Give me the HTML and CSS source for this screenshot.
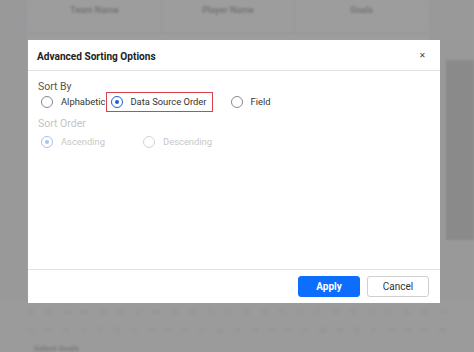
FILE: index.html
```html
<!DOCTYPE html>
<html>
<head>
<meta charset="utf-8">
<link rel="stylesheet" href="styles.css">
</head>
<body>
<div class="page">
  <div class="grid">
    <div class="gutter"></div>
    <div class="table">
      <div class="thead">
        <div class="th">Team Name</div>
        <div class="th">Player Name</div>
        <div class="th">Goals</div>
      </div>
    </div>
    <div class="side"></div>
  </div>
  <div class="rows">
    <div class="cells"><span>01</span><span>02</span><span>03</span><span>04</span><span>05</span><span>06</span><span>07</span><span>08</span><span>09</span><span>10</span><span>11</span><span>12</span><span>13</span><span>14</span><span>15</span><span>16</span><span>17</span><span>18</span><span>19</span><span>20</span><span>21</span><span>22</span><span>23</span><span>24</span></div>
    <div class="cells"><span>11</span><span>12</span><span>13</span><span>14</span><span>15</span><span>16</span><span>17</span><span>18</span><span>19</span><span>20</span><span>21</span><span>22</span><span>23</span><span>24</span><span>25</span><span>26</span><span>27</span><span>28</span><span>29</span><span>30</span><span>31</span><span>32</span><span>33</span><span>34</span><span>35</span></div>
    <div class="select">Select Goals</div>
  </div>
</div>

<div class="dialog">
  <div class="dlg-head">
    <span class="dlg-title">Advanced Sorting Options</span>
    <span class="close">&#x2715;</span>
  </div>
  <div class="dlg-body">
    <div class="label">Sort By</div>
    <div class="radios first">
      <label class="radio"><span class="circle"></span><span>Alphabetic</span></label>
      <label class="radio highlight"><span class="circle checked"></span><span>Data Source Order</span></label>
      <label class="radio"><span class="circle"></span><span>Field</span></label>
    </div>
    <div class="label disabled">Sort Order</div>
    <div class="radios disabled">
      <label class="radio"><span class="circle checked"></span><span>Ascending</span></label>
      <label class="radio"><span class="circle"></span><span>Descending</span></label>
    </div>
  </div>
  <div class="dlg-foot">
    <button class="btn primary">Apply</button>
    <button class="btn">Cancel</button>
  </div>
</div>
</body>
</html>
```
FILE: styles.css
```css
* { box-sizing: border-box; }
html, body {
  margin: 0;
  padding: 0;
  width: 474px;
  height: 352px;
  overflow: hidden;
  background: #9b9b9b;
  font-family: Roboto, "Liberation Sans", sans-serif;
}
.page {
  position: relative;
  width: 474px;
  height: 352px;
  filter: blur(0.8px);
}
.grid {
  display: flex;
  height: 300px;
}
.gutter {
  width: 28px;
  background: #999999;
  border-right: 1px solid #9c9cab;
}
.table {
  flex: 1;
  background: #9d9d9d;
  border-right: 1px solid #9c9cab;
}
.thead {
  display: flex;
  height: 34px;
  border-bottom: 1px solid #939393;
}
.th {
  flex: 1;
  text-align: center;
  font-size: 9px;
  font-weight: bold;
  color: #777;
  padding-top: 5px;
  border-right: 1px solid #949494;
}
.th:last-child { border-right: none; }
.side {
  width: 45px;
  background: linear-gradient(to bottom, #999 0, #999 60px, transparent 60px, transparent 240px, #999 240px),
              linear-gradient(to right, #999 0, #999 17px, #8a8a8a 17px);
}
.rows {
  padding: 2px 28px 0 28px;
}
.cells {
  display: flex;
  justify-content: space-between;
  font-size: 6px;
  color: #909090;
  height: 18px;
  align-items: center;
}
.select {
  margin-top: 6px;
  font-size: 8px;
  font-weight: bold;
  color: #7a7a7a;
  padding-left: 6px;
}

.dialog {
  position: absolute;
  left: 28px;
  top: 40px;
  width: 412px;
  height: 263px;
  background: #ffffff;
  display: flex;
  flex-direction: column;
}
.dlg-head {
  height: 31px;
  display: flex;
  align-items: center;
  justify-content: space-between;
  padding: 0 14px 0 9px;
  border-bottom: 1px solid #e2e2e2;
}
.dlg-title {
  font-size: 10.1px;
  font-weight: bold;
  color: #222;
  padding-top: 2px;
}
.close {
  font-size: 8px;
  color: #444;
  padding-top: 1px;
}
.dlg-body {
  flex: 1;
  padding: 9px 0 0 10px;
}
.label {
  font-size: 10.5px;
  color: #555;
  line-height: 13px;
}
.label.disabled { color: #c4c4c4; margin-top: 5px; }
.radios {
  display: flex;
  align-items: center;
  height: 21px;
  margin-left: 3px;
}
.radios.first { margin-top: -2px; }
.radios.disabled { margin-top: 1px; }
.radio {
  display: flex;
  align-items: center;
  gap: 8px;
  font-size: 9.4px;
  color: #333;
  height: 20px;
  margin-right: 18px;
}
.radios .radio:first-child { margin-right: 1px; }
.radio.highlight {
  border: 1.5px solid #d9414b;
  padding: 0 5px 0 4px;
  margin-right: 18px;
  gap: 7px;
}
.circle {
  width: 12px;
  height: 12px;
  border-radius: 50%;
  border: 1px solid #8a8a8a;
  position: relative;
}
.circle.checked { border: 1.5px solid #1a5fd6; }
.circle.checked::after {
  content: "";
  position: absolute;
  left: 50%;
  top: 50%;
  width: 4px;
  height: 4px;
  margin: -2px 0 0 -2px;
  border-radius: 50%;
  background: #1a5fd6;
}
.radios.disabled .radio { color: #c8c8c8; }
.radios.disabled .radio:first-child { margin-right: 38px; }
.radios.disabled .circle { border-color: #d4d4d4; }
.radios.disabled .circle.checked { border-color: #a9c2ec; }
.radios.disabled .circle.checked::after { background: #a9c2ec; }
.dlg-foot {
  height: 34px;
  border-top: 1px solid #e2e2e2;
  display: flex;
  justify-content: flex-end;
  align-items: center;
  gap: 7px;
  padding: 0 11px 1px 0;
}
.btn {
  width: 62px;
  height: 21px;
  border: 1px solid #cfcfcf;
  background: #fff;
  border-radius: 3px;
  font-family: Roboto, "Liberation Sans", sans-serif;
  font-size: 10px;
  color: #333;
  padding: 0;
}
.btn.primary {
  background: #0d6efd;
  border-color: #0d6efd;
  color: #fff;
  font-weight: bold;
}
```
